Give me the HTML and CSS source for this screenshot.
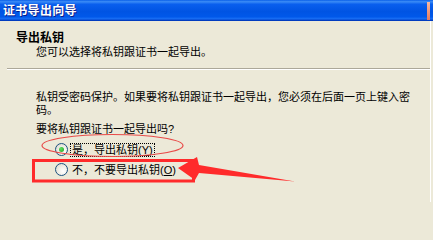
FILE: index.html
```html
<!DOCTYPE html>
<html lang="zh-CN">
<head>
<meta charset="utf-8">
<title>证书导出向导</title>
<link rel="stylesheet" href="styles.css">
</head>
<body>
<div class="window">
  <div class="titlebar">
    <span class="title">证书导出向导</span>
    <span class="close-edge"></span>
  </div>
  <div class="content">
    <div class="header">
      <div class="h-title">导出私钥</div>
      <div class="h-sub">您可以选择将私钥跟证书一起导出。</div>
    </div>
    <div class="sep"></div>
    <div class="main">
      <p class="para">私钥受密码保护。如果要将私钥跟证书一起导出，您必须在后面一页上键入密<br>码。</p>
      <p class="question">要将私钥跟证书一起导出吗?</p>
      <div class="options">
        <div class="opt"><span class="radio checked"></span><span class="label focus">是，导出私钥(<u>Y</u>)</span></div>
        <div class="opt"><span class="radio"></span><span class="label">不，不要导出私钥(<u>O</u>)</span></div>
      </div>
    </div>
  </div>
  <svg class="annot" width="433" height="202" viewBox="0 0 433 202">
    <ellipse cx="112.5" cy="145.5" rx="70.5" ry="11" fill="none" stroke="#e84a48" stroke-width="1.2"/>
    <rect x="33.5" y="160.5" width="160" height="20.5" fill="none" stroke="#ff2b2b" stroke-width="3"/>
    <polygon points="178,168 197,157 199,165 295,181.5 199,173 195,180" fill="#ff2b2b"/>
  </svg>
</div>
</body>
</html>
```

FILE: styles.css
```css
html, body {
  margin: 0;
  padding: 0;
}
body {
  width: 433px;
  height: 202px;
  overflow: hidden;
  background: #ece9d8;
  font-family: "Liberation Sans", "Noto Sans CJK SC", sans-serif;
  font-size: 11px;
  color: #000;
}
.window {
  position: relative;
  width: 433px;
  height: 202px;
  overflow: hidden;
  display: flex;
  flex-direction: column;
}
.titlebar {
  height: 21px;
  flex: none;
  display: flex;
  align-items: center;
  justify-content: space-between;
  background: linear-gradient(to bottom, #0a5fe8 0, #3b8cf6 8%, #0a5fee 20%, #0054e3 55%, #0058ea 80%, #1a6ff4 90%, #003fc7 96%, #0036b5 100%);
}
.title {
  color: #fff;
  font-weight: bold;
  font-size: 12px;
  line-height: 14px;
  padding-left: 3px;
  letter-spacing: 0.3px;
  text-shadow: 1px 1px 0 #0a1a8a;
}
.close-edge {
  width: 3px;
  height: 18px;
  margin-right: 3px;
  background: linear-gradient(to bottom, #f9b8a0, #e6795c);
}
.content {
  flex: 1;
  display: flex;
  flex-direction: column;
  border-right: 1px solid #fff;
  margin-right: 2px;
}
.header {
  height: 47px;
  padding-top: 10px;
  box-sizing: border-box;
}
.h-title {
  font-weight: bold;
  font-size: 12px;
  line-height: 14.5px;
  padding-left: 16px;
}
.h-sub {
  line-height: 13px;
  padding-left: 36px;
}
.sep {
  margin-left: 7px;
  border-top: 1px solid #aca899;
  border-bottom: 1px solid #fff;
}
.main {
  padding: 21px 0 0 36px;
}
.para {
  margin: 0;
  line-height: 12.5px;
  white-space: nowrap;
}
.question {
  margin: 7px 0 0;
  line-height: 12.5px;
}
.options {
  padding-left: 19px;
  margin-top: 7px;
  display: flex;
  flex-direction: column;
  gap: 6px;
}
.opt {
  display: flex;
  align-items: center;
  height: 14px;
}
.radio {
  width: 11px;
  height: 11px;
  border: 1px solid #1c5180;
  border-radius: 50%;
  background: radial-gradient(circle at 65% 65%, #ffffff 0, #f2f1ea 40%, #d6d3c4 100%);
  display: flex;
  align-items: center;
  justify-content: center;
  margin-right: 2px;
}
.radio.checked::after {
  content: "";
  width: 5px;
  height: 5px;
  border-radius: 50%;
  background: radial-gradient(circle at 35% 35%, #5fe05f, #21a121);
}
.label {
  line-height: 12px;
  padding: 0 1px;
  border: 1px solid transparent;
}
.label.focus {
  border: 1px dotted #000;
}
.label u {
  text-decoration: underline;
}
.annot {
  position: absolute;
  left: 0;
  top: 0;
  pointer-events: none;
}
```
